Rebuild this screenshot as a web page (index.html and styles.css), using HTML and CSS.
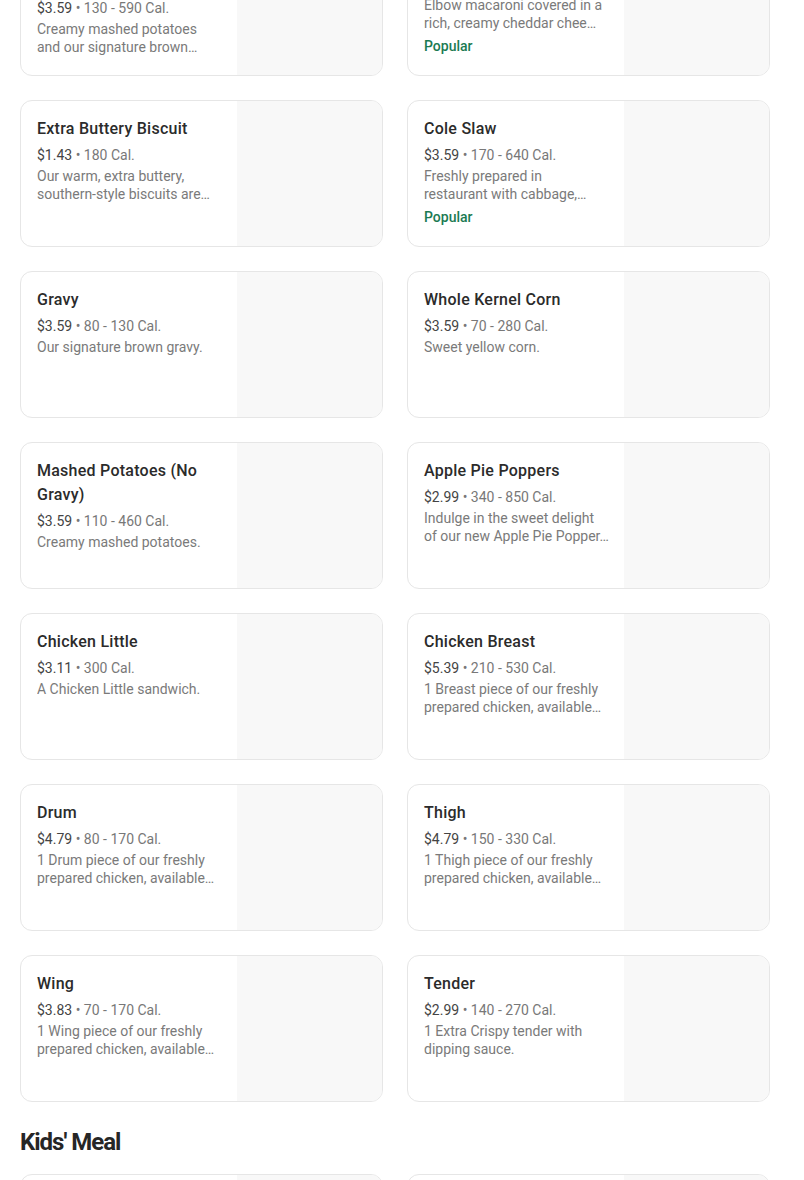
FILE: index.html
```html
<!DOCTYPE html>
<html lang="en">
<head>
<meta charset="utf-8">
<title>Menu</title>
<link rel="stylesheet" href="styles.css">
</head>
<body>
<main class="page">
  <section class="section section-first">
    <div class="grid">
      <article class="card">
        <div class="info">
          <h3 class="name">Mashed Potatoes &amp; Gravy Family Size</h3>
          <p class="meta"><span class="price">$3.59</span> • 130 - 590 Cal.</p>
          <p class="desc">Creamy mashed potatoes<br>and our signature brown…</p>
        </div>
        <div class="thumb"></div>
      </article>
      <article class="card">
        <div class="info">
          <h3 class="name">Mac &amp; Cheese</h3>
          <p class="meta"><span class="price">$3.59</span> • 170 - 640 Cal.</p>
          <p class="desc">Elbow macaroni covered in a<br>rich, creamy cheddar chee…</p>
          <p class="tag">Popular</p>
        </div>
        <div class="thumb"></div>
      </article>
      <article class="card">
        <div class="info">
          <h3 class="name">Extra Buttery Biscuit</h3>
          <p class="meta"><span class="price">$1.43</span> • 180 Cal.</p>
          <p class="desc">Our warm, extra buttery,<br>southern-style biscuits are…</p>
        </div>
        <div class="thumb"></div>
      </article>
      <article class="card">
        <div class="info">
          <h3 class="name">Cole Slaw</h3>
          <p class="meta"><span class="price">$3.59</span> • 170 - 640 Cal.</p>
          <p class="desc">Freshly prepared in<br>restaurant with cabbage,…</p>
          <p class="tag">Popular</p>
        </div>
        <div class="thumb"></div>
      </article>
      <article class="card">
        <div class="info">
          <h3 class="name">Gravy</h3>
          <p class="meta"><span class="price">$3.59</span> • 80 - 130 Cal.</p>
          <p class="desc">Our signature brown gravy.</p>
        </div>
        <div class="thumb"></div>
      </article>
      <article class="card">
        <div class="info">
          <h3 class="name">Whole Kernel Corn</h3>
          <p class="meta"><span class="price">$3.59</span> • 70 - 280 Cal.</p>
          <p class="desc">Sweet yellow corn.</p>
        </div>
        <div class="thumb"></div>
      </article>
      <article class="card">
        <div class="info">
          <h3 class="name">Mashed Potatoes (No Gravy)</h3>
          <p class="meta"><span class="price">$3.59</span> • 110 - 460 Cal.</p>
          <p class="desc">Creamy mashed potatoes.</p>
        </div>
        <div class="thumb"></div>
      </article>
      <article class="card">
        <div class="info">
          <h3 class="name">Apple Pie Poppers</h3>
          <p class="meta"><span class="price">$2.99</span> • 340 - 850 Cal.</p>
          <p class="desc">Indulge in the sweet delight<br>of our new Apple Pie Popper…</p>
        </div>
        <div class="thumb"></div>
      </article>
      <article class="card">
        <div class="info">
          <h3 class="name">Chicken Little</h3>
          <p class="meta"><span class="price">$3.11</span> • 300 Cal.</p>
          <p class="desc">A Chicken Little sandwich.</p>
        </div>
        <div class="thumb"></div>
      </article>
      <article class="card">
        <div class="info">
          <h3 class="name">Chicken Breast</h3>
          <p class="meta"><span class="price">$5.39</span> • 210 - 530 Cal.</p>
          <p class="desc">1 Breast piece of our freshly<br>prepared chicken, available…</p>
        </div>
        <div class="thumb"></div>
      </article>
      <article class="card">
        <div class="info">
          <h3 class="name">Drum</h3>
          <p class="meta"><span class="price">$4.79</span> • 80 - 170 Cal.</p>
          <p class="desc">1 Drum piece of our freshly<br>prepared chicken, available…</p>
        </div>
        <div class="thumb"></div>
      </article>
      <article class="card">
        <div class="info">
          <h3 class="name">Thigh</h3>
          <p class="meta"><span class="price">$4.79</span> • 150 - 330 Cal.</p>
          <p class="desc">1 Thigh piece of our freshly<br>prepared chicken, available…</p>
        </div>
        <div class="thumb"></div>
      </article>
      <article class="card">
        <div class="info">
          <h3 class="name">Wing</h3>
          <p class="meta"><span class="price">$3.83</span> • 70 - 170 Cal.</p>
          <p class="desc">1 Wing piece of our freshly<br>prepared chicken, available…</p>
        </div>
        <div class="thumb"></div>
      </article>
      <article class="card">
        <div class="info">
          <h3 class="name">Tender</h3>
          <p class="meta"><span class="price">$2.99</span> • 140 - 270 Cal.</p>
          <p class="desc">1 Extra Crispy tender with<br>dipping sauce.</p>
        </div>
        <div class="thumb"></div>
      </article>
    </div>
  </section>
  <section class="section">
    <h2 class="section-title">Kids' Meal</h2>
    <div class="grid">
      <article class="card">
        <div class="info">
          <h3 class="name">Kids' Meal</h3>
          <p class="meta"><span class="price">$5.99</span> • 400 - 700 Cal.</p>
          <p class="desc">A kid-sized meal.</p>
        </div>
        <div class="thumb"></div>
      </article>
      <article class="card">
        <div class="info">
          <h3 class="name">Kids' Tenders</h3>
          <p class="meta"><span class="price">$5.99</span> • 400 - 700 Cal.</p>
          <p class="desc">A kid-sized meal.</p>
        </div>
        <div class="thumb"></div>
      </article>
    </div>
  </section>
</main>
</body>
</html>
```

FILE: styles.css
```css
* { box-sizing: border-box; }
html, body { margin: 0; padding: 0; background: #fff; }
body {
  font-family: Roboto, "Liberation Sans", sans-serif;
  color: #262626;
  overflow: hidden;
}
.page { padding: 0 34px 0 20px; }
.section-first { margin-top: -71px; }
.section { margin-bottom: 24px; }
.grid {
  display: grid;
  grid-template-columns: 1fr 1fr;
  gap: 24px;
}
.card {
  display: flex;
  height: 147px;
  border: 1px solid #e6e6e6;
  border-radius: 12px;
  overflow: hidden;
  background: #fff;
}
.info {
  flex: 1;
  min-width: 0;
  padding: 16px 10px 16px 16px;
}
.thumb {
  width: 145px;
  flex: none;
  background: #f8f8f8;
}
.name {
  margin: 0;
  font-size: 16px;
  line-height: 24px;
  font-weight: 500;
  letter-spacing: 0.25px;
  color: #2b2b2b;
}
.meta {
  margin: 4px 0 0;
  font-size: 14px;
  line-height: 20px;
  color: #787878;
}
.price { color: #444; }
.desc {
  margin: 2px 0 0;
  font-size: 14px;
  line-height: 18px;
  color: #7a7a7a;
  display: -webkit-box;
  -webkit-line-clamp: 2;
  -webkit-box-orient: vertical;
  overflow: hidden;
}
.tag {
  margin: 4px 0 0;
  font-size: 14px;
  line-height: 20px;
  font-weight: 500;
  color: #1b7a52;
}
.section-title {
  margin: 0 0 16px;
  font-size: 24px;
  line-height: 32px;
  font-weight: 700;
  letter-spacing: -1px;
  color: #262626;
}
```
